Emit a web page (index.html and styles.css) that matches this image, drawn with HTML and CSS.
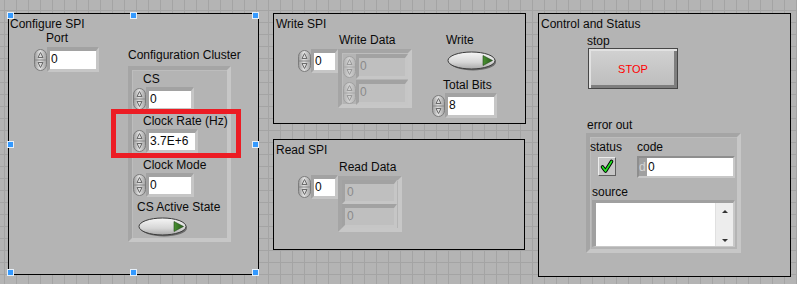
FILE: index.html
```html
<!DOCTYPE html>
<html lang="en">
<head>
  <meta charset="UTF-8" />
  <title>SPI Front Panel</title>
  <link rel="stylesheet" href="styles.css">
</head>
<body>
<div class="front">
  <svg class="defs" width="0" height="0">
    <defs>
      <linearGradient id="spg" x1="0" x2="1" y1="0" y2="0">
        <stop offset="0" stop-color="#9a9a9a"/>
        <stop offset="0.45" stop-color="#e2e2e2"/>
        <stop offset="1" stop-color="#a2a2a2"/>
      </linearGradient>
      <linearGradient id="spgd" x1="0" x2="1" y1="0" y2="0">
        <stop offset="0" stop-color="#b0b0b0"/>
        <stop offset="0.45" stop-color="#d2d2d2"/>
        <stop offset="1" stop-color="#b4b4b4"/>
      </linearGradient>
      <linearGradient id="swg" x1="0" x2="0" y1="0" y2="1">
        <stop offset="0" stop-color="#f6f6f6"/>
        <stop offset="0.6" stop-color="#d6d6d6"/>
        <stop offset="1" stop-color="#a9a9a9"/>
      </linearGradient>
      <linearGradient id="grg" x1="0" x2="1" y1="0" y2="0">
        <stop offset="0" stop-color="#4a9232"/>
        <stop offset="1" stop-color="#275a1a"/>
      </linearGradient>
      <symbol id="spin" viewBox="0 0 13 22">
        <rect x="0.5" y="0.5" width="12" height="21" rx="6" ry="6" fill="url(#spg)" stroke="#7c7c7c"/>
        <line x1="1" y1="11" x2="12" y2="11" stroke="#888"/>
        <path d="M6.5 3.5 L4 8.5 H9 Z" fill="none" stroke="#6c6c6c"/>
        <path d="M4 13.5 H9 L6.5 18.5 Z" fill="none" stroke="#6c6c6c"/>
      </symbol>
      <symbol id="spin-dim" viewBox="0 0 13 22">
        <rect x="0.5" y="0.5" width="12" height="21" rx="6" ry="6" fill="url(#spgd)" stroke="#a0a0a0"/>
        <line x1="1" y1="11" x2="12" y2="11" stroke="#a6a6a6"/>
        <path d="M6.5 3.5 L4 8.5 H9 Z" fill="none" stroke="#9a9a9a"/>
        <path d="M4 13.5 H9 L6.5 18.5 Z" fill="none" stroke="#9a9a9a"/>
      </symbol>
      <symbol id="sw" viewBox="0 0 50 20">
        <ellipse cx="26" cy="11" rx="23" ry="8.5" fill="#6c6c6c"/>
        <ellipse cx="24.5" cy="9.5" rx="23.5" ry="8.5" fill="url(#swg)" stroke="#3a3a3a"/>
        <path d="M36 4.5 L45.5 9.5 L36 14.5 Z" fill="url(#grg)" stroke="#22461a" stroke-width="0.6" stroke-linejoin="round"/>
      </symbol>
    </defs>
  </svg>

  <!-- Configure SPI -->
  <div class="deco cfg">
    <span class="deco-title">Configure SPI</span>
    <div class="ctl port">
      <span class="lbl ml12">Port</span>
      <div class="num mt2">
        <svg class="spin"><use href="#spin"/></svg>
        <div class="field w52 h25">0</div>
      </div>
    </div>
    <span class="lbl ctl cl-lbl">Configuration Cluster</span>
    <div class="frame cfg-cl">
      <span class="lbl ml11 mt2">CS</span>
      <div class="num ml1 mt1">
        <svg class="spin"><use href="#spin"/></svg>
        <div class="field w48">0</div>
      </div>
      <span class="lbl ml11 mt3">Clock Rate (Hz)</span>
      <div class="num ml1 mt1">
        <svg class="spin"><use href="#spin"/></svg>
        <div class="field w52">3.7E+6</div>
      </div>
      <span class="lbl ml11 mt5">Clock Mode</span>
      <div class="num ml1 mt1">
        <svg class="spin"><use href="#spin"/></svg>
        <div class="field w48">0</div>
      </div>
      <span class="lbl ml5 mt3">CS Active State</span>
      <svg class="switch ml6 mt3"><use href="#sw"/></svg>
    </div>
  </div>

  <!-- Write SPI -->
  <div class="deco wr">
    <span class="deco-title">Write SPI</span>
    <span class="lbl ctl wd-lbl">Write Data</span>
    <div class="num ctl wd-idx">
      <svg class="spin"><use href="#spin"/></svg>
      <div class="field w27">0</div>
    </div>
    <div class="frame arr wd-arr">
      <div class="num ml1">
        <svg class="spin"><use href="#spin-dim"/></svg>
        <div class="field dim w52">0</div>
      </div>
      <div class="num ml1">
        <svg class="spin"><use href="#spin-dim"/></svg>
        <div class="field dim w52">0</div>
      </div>
    </div>
    <span class="lbl ctl wr-lbl">Write</span>
    <svg class="switch ctl wr-sw"><use href="#sw"/></svg>
    <span class="lbl ctl tb-lbl">Total Bits</span>
    <div class="num ctl tb">
      <svg class="spin"><use href="#spin"/></svg>
      <div class="field w52 h25">8</div>
    </div>
  </div>

  <!-- Read SPI -->
  <div class="deco rd">
    <span class="deco-title">Read SPI</span>
    <span class="lbl ctl rd-lbl">Read Data</span>
    <div class="num ctl rd-idx">
      <svg class="spin"><use href="#spin"/></svg>
      <div class="field w27">0</div>
    </div>
    <div class="frame arr rd-arr">
      <div class="field dim ind">0</div>
      <div class="field dim ind">0</div>
    </div>
  </div>

  <!-- Control and Status -->
  <div class="deco cs">
    <span class="deco-title">Control and Status</span>
    <span class="lbl ctl stop-lbl">stop</span>
    <button class="ctl stop">STOP</button>
    <span class="lbl ctl err-lbl">error out</span>
    <div class="frame err">
      <span class="lbl ctl st-lbl">status</span>
      <div class="ctl led">
        <svg width="16" height="17" viewBox="0 0 16 17">
          <path d="M3.5 9 L6.5 13 L12.5 3.5" stroke="#000" stroke-width="3.6" fill="none" stroke-linecap="round" stroke-linejoin="round"/>
          <path d="M3.5 9 L6.5 13 L12.5 3.5" stroke="#22e522" stroke-width="1.7" fill="none" stroke-linecap="round" stroke-linejoin="round"/>
        </svg>
      </div>
      <span class="lbl ctl code-lbl">code</span>
      <div class="ctl code">
        <span class="radix">d</span><span class="code-val">0</span>
      </div>
      <span class="lbl ctl src-lbl">source</span>
      <div class="ctl src">
        <div class="src-text"></div>
        <div class="scroll">
          <span class="arrow up"></span>
          <span class="arrow down"></span>
        </div>
      </div>
    </div>
  </div>

  <!-- selection and highlight -->
  <span class="handle hx1 hy1"></span>
  <span class="handle hx2 hy1"></span>
  <span class="handle hx3 hy1"></span>
  <span class="handle hx1 hy2"></span>
  <span class="handle hx3 hy2"></span>
  <span class="handle hx1 hy3"></span>
  <span class="handle hx2 hy3"></span>
  <span class="handle hx3 hy3"></span>
  <div class="mark"></div>
</div>
</body>
</html>
```

FILE: styles.css
```css
body {
  margin: 0;
  font-family: "Liberation Sans", Arial, sans-serif;
  font-size: 12px;
  color: #0a0a0a;
}
.front {
  position: relative;
  width: 797px;
  height: 284px;
  overflow: hidden;
  background-color: #b4b4b4;
  background-image:
    linear-gradient(to right, #a4a4a4 1px, transparent 1px),
    linear-gradient(to bottom, #a4a4a4 1px, transparent 1px);
  background-size: 12px 12px;
  background-position: 4px 10px;
}
.defs {
  position: absolute;
  width: 0;
  height: 0;
}

/* decorations */
.deco {
  position: absolute;
  box-sizing: border-box;
  border: 1px solid #000;
  background: #b4b4b4;
}
.deco-title {
  position: absolute;
  top: 3px;
  left: 1px;
  line-height: 14px;
  white-space: nowrap;
}
.cfg { left: 8px; top: 13px; width: 251px; height: 262px; }
.wr  { left: 273px; top: 13px; width: 253px; height: 111px; }
.rd  { left: 273px; top: 139px; width: 252px; height: 111px; }
.cs  { left: 538px; top: 13px; width: 253px; height: 264px; }
.wr .deco-title, .rd .deco-title, .cs .deco-title { left: 2px; }

.ctl { position: absolute; }
.lbl {
  display: block;
  line-height: 14px;
  white-space: nowrap;
}

/* numerics */
.num {
  display: flex;
  align-items: center;
}
.spin {
  display: block;
  flex: none;
  width: 13px;
  height: 22px;
}
.field {
  box-sizing: border-box;
  height: 24px;
  border-style: solid;
  border-width: 4px 3px 3px 3px;
  border-color: #a2a2a2 #c6c6c6 #c6c6c6 #a2a2a2;
  background: #fff;
  padding-left: 1px;
  line-height: 17px;
  white-space: nowrap;
  overflow: hidden;
}
.field.dim {
  background: #bfbfbf;
  color: #8a8a8a;
}
.w27 { width: 27px; }
.w48 { width: 48px; }
.w52 { width: 52px; }
.h25 { height: 25px; }
.ml1 { margin-left: 1px; }
.ml5 { margin-left: 5px; }
.ml6 { margin-left: 6px; }
.ml11 { margin-left: 11px; }
.ml12 { margin-left: 12px; }
.mt1 { margin-top: 1px; }
.mt2 { margin-top: 2px; }
.mt3 { margin-top: 3px; }
.mt5 { margin-top: 5px; }

/* clusters and arrays */
.frame {
  position: absolute;
  box-sizing: border-box;
  border: 4px solid;
  border-color: #a5a5a5 #c7c7c7 #c7c7c7 #a5a5a5;
  box-shadow: inset 1px 1px 0 #bdbdbd;
}
.cfg-cl {
  left: 119px;
  top: 52px;
  width: 103px;
  height: 176px;
  display: flex;
  flex-direction: column;
  align-items: flex-start;
}
.switch {
  display: block;
  width: 50px;
  height: 20px;
}

.port { left: 25px; top: 17px; }
.cl-lbl { left: 119px; top: 34px; }

.wd-lbl { left: 65px; top: 19px; }
.wd-idx { left: 24px; top: 35px; }
.arr {
  display: flex;
  flex-direction: column;
  gap: 1px;
}
.wd-arr {
  left: 64px;
  top: 35px;
  width: 74px;
  height: 59px;
  padding-top: 1px;
}
.wd-arr .field { height: 25px; }
.wr-lbl { left: 172px; top: 19px; }
.wr-sw { left: 173px; top: 37px; width: 50px; height: 20px; }
.tb-lbl { left: 169px; top: 64px; }
.tb { left: 158px; top: 79px; }

.rd-lbl { left: 65px; top: 20px; }
.rd-idx { left: 24px; top: 35px; }
.rd-arr {
  left: 64px;
  top: 36px;
  width: 64px;
  height: 56px;
  gap: 0;
}
.ind {
  width: 55px;
  margin-left: 0;
  padding-left: 2px;
}

/* control and status */
.stop-lbl { left: 48px; top: 20px; }
.stop {
  left: 49px;
  top: 34px;
  width: 90px;
  height: 41px;
  box-sizing: border-box;
  border: 1px solid #474747;
  background: linear-gradient(#d2d2d2, #bcbcbc);
  box-shadow: inset 2px 2px 0 #e2e2e2, inset -3px -3px 0 #7e7e7e;
  color: #ff0000;
  font-family: "Liberation Sans", Arial, sans-serif;
  font-size: 11px;
  padding: 0;
}
.err-lbl { left: 48px; top: 104px; }
.err {
  left: 47px;
  top: 119px;
  width: 155px;
  height: 120px;
}
.st-lbl { left: 0; top: 3px; }
.led {
  left: 8px;
  top: 20px;
  width: 18px;
  height: 19px;
  box-sizing: border-box;
  border: 1px solid;
  border-color: #ececec #5e5e5e #5e5e5e #ececec;
  background: #c6c6c6;
}
.led svg { display: block; }
.code-lbl { left: 47px; top: 3px; }
.code {
  left: 47px;
  top: 19px;
  width: 98px;
  height: 22px;
  box-sizing: border-box;
  border-style: solid;
  border-width: 2px 2px 2px 2px;
  border-color: #8e8e8e #c8c8c8 #c8c8c8 #8e8e8e;
  display: flex;
  line-height: 18px;
}
.radix {
  width: 8px;
  background: #a0a0a0;
  color: #d4d4d4;
}
.code-val {
  flex: 1;
  background: #fff;
  padding-left: 1px;
}
.src-lbl { left: 2px; top: 48px; }
.src {
  left: 2px;
  top: 63px;
  width: 143px;
  height: 47px;
  box-sizing: border-box;
  border-style: solid;
  border-width: 3px 2px 1px 4px;
  border-color: #a0a0a0 #c8c8c8 #c8c8c8 #a0a0a0;
  background: #fff;
  display: flex;
}
.src-text { flex: 1; }
.scroll {
  position: relative;
  width: 17px;
  background: #ededed;
  border-left: 1px solid #e0e0e0;
}
.arrow {
  position: absolute;
  left: 6px;
  width: 0;
  height: 0;
  border-left: 3px solid transparent;
  border-right: 3px solid transparent;
}
.arrow.up { top: 7px; border-bottom: 3px solid #333; }
.arrow.down { bottom: 4px; border-top: 3px solid #333; }

/* selection handles on Configure SPI */
.handle {
  position: absolute;
  width: 5px;
  height: 5px;
  background: #3399ff;
  border: 1px solid #e6f0fa;
}
.hx1 { left: 7px; }
.hx2 { left: 130px; }
.hx3 { left: 252px; }
.hy1 { top: 12px; }
.hy2 { top: 141px; }
.hy3 { top: 269px; }

.mark {
  position: absolute;
  left: 111px;
  top: 109px;
  width: 130px;
  height: 49px;
  box-sizing: border-box;
  border: 5px solid #ec1c24;
}
```
